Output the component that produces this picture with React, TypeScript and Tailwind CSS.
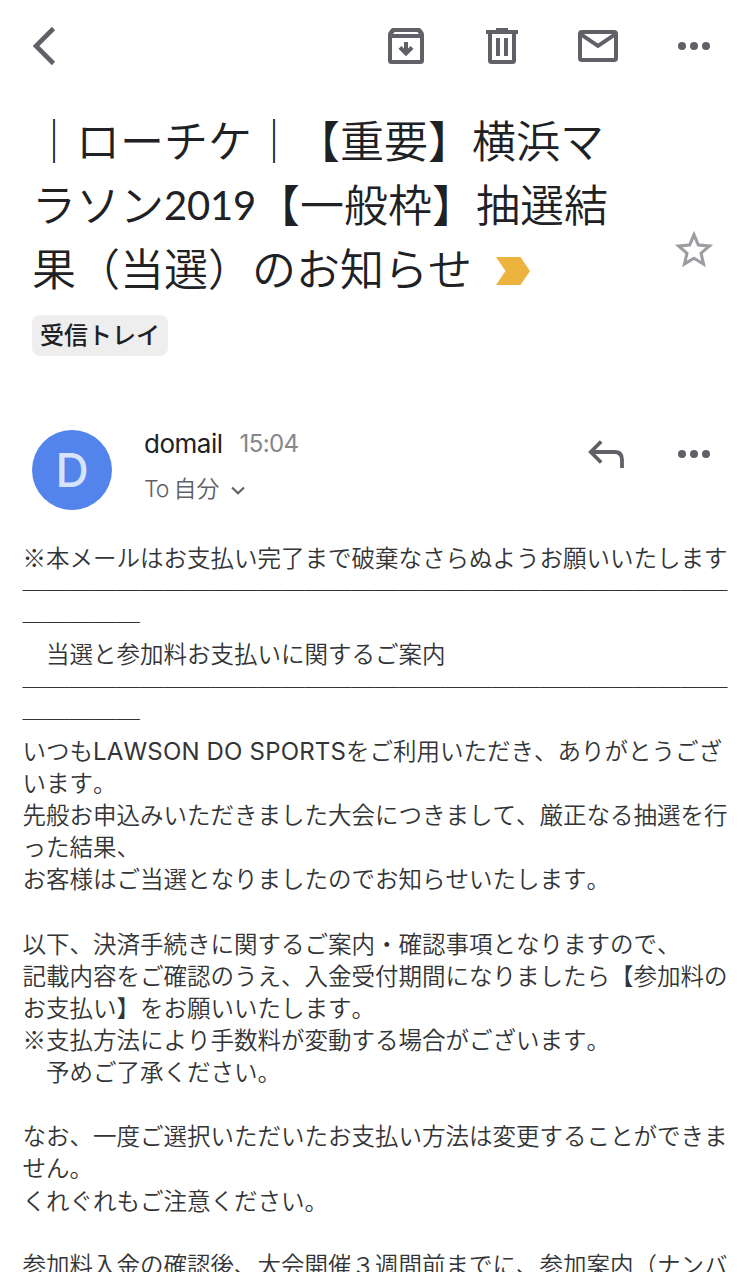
import React from "react";

const LAWSON = "LAWSON DO SPORTS";

const bodyLines = [
  "※本メールはお支払い完了まで破棄なさらぬようお願いいたします",
  "─".repeat(30),
  "─".repeat(5),
  "　当選と参加料お支払いに関するご案内",
  "─".repeat(30),
  "─".repeat(5),
  `いつも${LAWSON}をご利用いただき、ありがとうござ`,
  "います。",
  "先般お申込みいただきました大会につきまして、厳正なる抽選を行",
  "った結果、",
  "お客様はご当選となりましたのでお知らせいたします。",
  "",
  "以下、決済手続きに関するご案内・確認事項となりますので、",
  "記載内容をご確認のうえ、入金受付期間になりましたら【参加料の",
  "お支払い】をお願いいたします。",
  "※支払方法により手数料が変動する場合がございます。",
  "　予めご了承ください。",
  "",
  "なお、一度ご選択いただいたお支払い方法は変更することができま",
  "せん。",
  "くれぐれもご注意ください。",
  "",
  "参加料入金の確認後、大会開催３週間前までに、参加案内（ナンバ",
];

const BackIcon = () => (
  <svg width="24" height="40" viewBox="0 0 24 40" fill="none">
    <path d="M21.500 2.500 4 20l17.500 17.500" stroke="#5f6166" strokeWidth="4.600" />
  </svg>
);

const ArchiveIcon = () => (
  <svg width="36" height="36" viewBox="0 0 36 36" fill="#5f6166">
    <path
      fillRule="evenodd"
      d="M5 0H31Q32.300 0 33 1L35.200 4Q36 5 36 6.500V32.500Q36 36 32.500 36H3.500Q0 36 0 32.500V6.500Q0 5 .8 4L3 1Q3.700 0 5 0ZM6.600 4 5 6H31L29.400 4ZM4 10V32H32V10Z"
    />
    <path d="M16 14h4v6.500l2.600-2.600 2.900 2.900L18 28.300l-7.500-7.500 2.900-2.900 2.600 2.600z" />
  </svg>
);

const TrashIcon = () => (
  <svg width="32" height="36" viewBox="0 0 32 36" fill="#5f6166">
    <path
      fillRule="evenodd"
      d="M10 0H22V2H32V6H30V32.500Q30 36 26.500 36H5.500Q2 36 2 32.500V6H0V2H10ZM6 6V32H26V6ZM10 10H14V28H10ZM18 10H22V28H18Z"
    />
  </svg>
);

const MailIcon = () => (
  <svg width="40" height="32" viewBox="0 0 40 32" fill="none" stroke="#5f6166" strokeWidth="4">
    <rect x="2" y="2" width="36" height="28" rx="1.800" />
    <path d="M2.500 4.200 20 15.900 37.500 4.200" />
  </svg>
);

const MoreIcon = () => (
  <svg width="32" height="8" viewBox="0 0 32 8" fill="#5f6166">
    <circle cx="4" cy="4" r="4" />
    <circle cx="16" cy="4" r="4" />
    <circle cx="28" cy="4" r="4" />
  </svg>
);

const StarIcon = () => (
  <svg width="46" height="46" viewBox="0 0 24 24" fill="#9b9da1">
    <path d="M22 9.240l-7.190-.62L12 2 9.190 8.630 2 9.240l5.460 4.730L5.820 21 12 17.270 18.180 21l-1.630-7.030L22 9.240zM12 15.400l-3.760 2.270 1-4.280-3.320-2.880 4.380-.38L12 6.100l1.710 4.040 4.380.38-3.320 2.880 1 4.280L12 15.400z" />
  </svg>
);

const ReplyIcon = () => (
  <svg width="36" height="28" viewBox="0 0 36 28" fill="none" stroke="#5f6166" strokeWidth="3.800">
    <path d="M13.200 1.500 2.800 12l10.400 10.500M3.500 12H26.500Q34 12 34 19.500V28" />
  </svg>
);

const Header = () => (
  <header className="flex h-[92px] items-center pl-[32px] pr-[40px]">
    <BackIcon />
    <div className="ml-auto flex items-center">
      <ArchiveIcon />
      <div className="ml-[62px]"><TrashIcon /></div>
      <div className="ml-[60px]"><MailIcon /></div>
      <div className="ml-[60px]"><MoreIcon /></div>
    </div>
  </header>
);

const Subject = () => (
  <section className="flex h-[223px] pl-[32px] pr-[33px] pt-[15px]">
    <h1 className="whitespace-nowrap font-['Noto_Sans_CJK_JP',sans-serif] text-[44px] font-[350] leading-[64px] text-[#202124] [font-kerning:none]">
      <div className="h-[64px]">｜ローチケ｜【重要】横浜マ</div>
      <div className="h-[64px]">
        ラソン
        <span className="align-[2px] font-['Lato',sans-serif] text-[40px] font-normal leading-none tracking-[-0.200px]">2019</span>
        【一般枠】抽選結
      </div>
      <div className="flex h-[64px] items-center">
        果（当選）のお知らせ
        <svg className="ml-[24px] mt-[7px]" width="34" height="28" viewBox="0 0 34 28" fill="#ecb43f">
          <path d="M0 0H24.500L34 14 24.500 28H0L9.500 14Z" />
        </svg>
      </div>
    </h1>
    <div className="ml-auto mt-[120px]"><StarIcon /></div>
  </section>
);

const Sender = () => (
  <section className="mt-[74px] flex h-[80px] pl-[32px] pr-[40px]">
    <div className="flex size-[80px] items-center justify-center rounded-full bg-[#5384ec] font-['Inter',sans-serif] text-[46px] font-medium text-[#d6e3fb]">
      D
    </div>
    <div className="ml-[32px] whitespace-nowrap font-['Inter','Noto_Sans_CJK_JP',sans-serif]">
      <div className="flex h-[26px] items-center">
        <span className="text-[26px] tracking-[-0.500px] text-[#202124]">domail</span>
        <span className="ml-[17px] mt-[2px] text-[24px] tracking-[-0.600px] text-[#85878b]">15:04</span>
      </div>
      <div className="mt-[19px] flex h-[28px] items-center text-[23px] font-[350] text-[#5f6166]">
        <span className="tracking-[-1px]">To</span>
        <span className="ml-[5px]">自分</span>
        <svg className="ml-[12px] mt-[3px]" width="14" height="9" viewBox="0 0 14 9" fill="none">
          <path d="M1 1.500 7 7.200 13 1.500" stroke="#5f6166" strokeWidth="2.200" />
        </svg>
      </div>
    </div>
    <div className="ml-auto mt-[10px]"><ReplyIcon /></div>
    <div className="ml-[54px] mt-[20px]"><MoreIcon /></div>
  </section>
);

const BodyLine = ({ text }: { text: string }) => {
  const [before, after] = text.split(LAWSON);
  return (
    <div className="h-[32.140px]">
      {before}
      {after !== undefined && (
        <span className="font-['Inter',sans-serif] text-[24px] font-normal leading-none tracking-[0.180px]">{LAWSON}</span>
      )}
      {after}
    </div>
  );
};

const App = () => {
  return (
    <div className="h-[1272px] w-[750px] overflow-hidden bg-white">
      <Header />
      <Subject />
      <div className="ml-[32px] flex h-[41px] w-[136px] items-center justify-center rounded-[8px] bg-[#eeeeee] pb-[3px] font-['Noto_Sans_CJK_JP',sans-serif] text-[24px] font-medium text-[#202124]">
        受信トレイ
      </div>
      <Sender />
      <main className="mt-[31px] whitespace-pre pl-[22.500px] font-['Noto_Sans_CJK_JP',sans-serif] text-[23.500px] font-[350] leading-[32.140px] text-[#333436] [font-kerning:none]">
        {bodyLines.map((line, i) => (
          <BodyLine key={i} text={line} />
        ))}
      </main>
    </div>
  );
};

export default App;
